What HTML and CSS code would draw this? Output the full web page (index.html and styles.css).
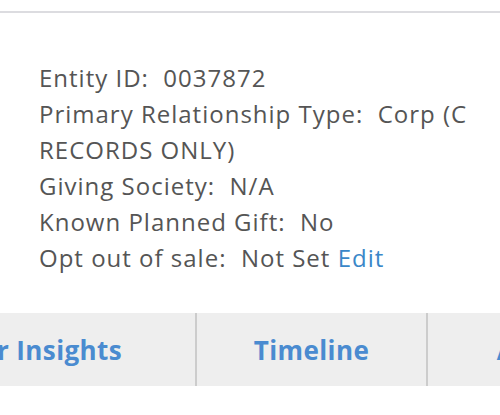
FILE: index.html
```html
<!DOCTYPE html>
<html lang="en">
<head>
    <meta charset="UTF-8">
    <meta name="viewport" content="width=device-width, initial-scale=1.0">
    <title>Entity Summary</title>
    <link rel="stylesheet" href="styles.css">
</head>
<body>
    <div class="page">
        <div class="header-strip"></div>
        <div class="details">
            <div class="detail">Entity ID:&nbsp; 0037872</div>
            <div class="detail">Primary Relationship Type:&nbsp; Corp (C RECORDS ONLY)</div>
            <div class="detail">Giving Society:&nbsp; N/A</div>
            <div class="detail">Known Planned Gift:&nbsp; No</div>
            <div class="detail">Opt out of sale:&nbsp; Not Set <a href="#" class="edit-link">Edit</a></div>
        </div>
        <nav class="tabs">
            <a href="#" class="tab tab-first">Donor Insights</a>
            <a href="#" class="tab">Timeline</a>
            <a href="#" class="tab tab-last">Activity</a>
        </nav>
    </div>
</body>
</html>
```

FILE: styles.css
```css
body {
    margin: 0;
    font-family: "Open Sans", Arial, sans-serif;
    background-color: white;
    overflow: hidden;
}
.page {
    width: 500px;
    overflow: hidden;
}
.header-strip {
    height: 11px;
    border-bottom: 2px solid #dcdce0;
}
.details {
    padding: 47px 10px 37px 39px;
    width: 451px;
}
.detail {
    font-size: 24px;
    line-height: 36px;
    letter-spacing: 1px;
    color: #555;
}
.edit-link {
    color: #3a87c8;
    text-decoration: none;
}
.tabs {
    display: flex;
    height: 73px;
    background-color: #eee;
    margin-left: -146px;
    width: 900px;
}
.tab {
    display: flex;
    align-items: center;
    justify-content: center;
    flex: 0 0 auto;
    width: 229px;
    font-size: 26px;
    font-weight: bold;
    letter-spacing: 0.4px;
    color: #4a8bd0;
    text-decoration: none;
    border-right: 2px solid #ccc;
}
.tab-first {
    width: 341px;
}
.tab-last {
    width: 240px;
    border-right: none;
}
```
